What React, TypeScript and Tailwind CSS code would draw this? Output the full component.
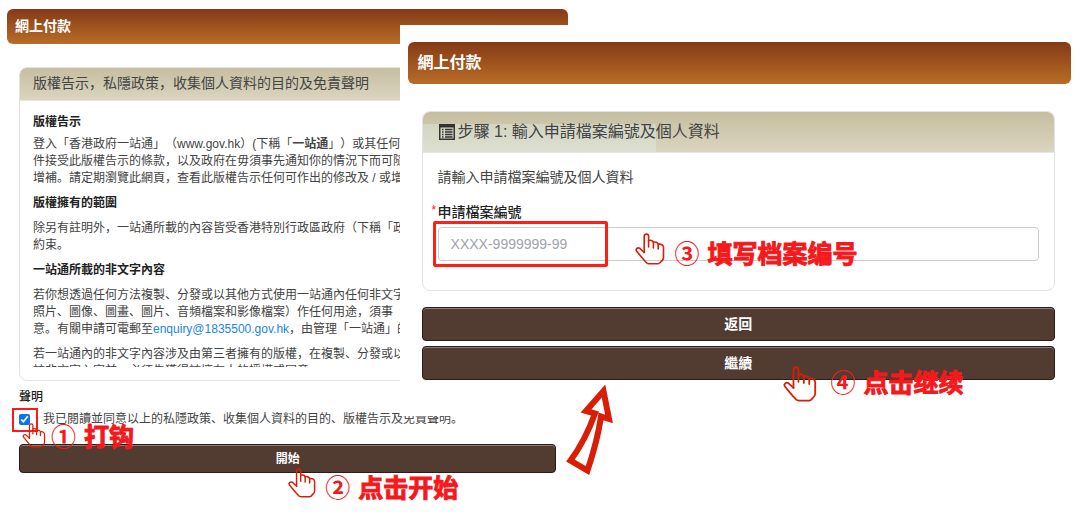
import React from 'react'

const Hand = ({ className }: { className: string }) => {
  return (
    <svg
      viewBox="0 0 30 32"
      fill="none"
      stroke="#d81e06"
      strokeWidth="1.6"
      strokeLinecap="round"
      strokeLinejoin="round"
      aria-hidden="true"
      className={className}
    >
      <path d="M9.200 19.500V3.300a2.200 2.200 0 0 1 4.400 0V14" />
      <path d="M13.600 7.600c3-.8 4.800.2 4.800 2.600V15" />
      <path d="M18.400 9.200c3-.5 4.800.5 4.800 2.800V16" />
      <path d="M23.200 11.200c3.200-.4 5.300.8 5.300 3.400V24.500c0 1-.3 1.800-1 2.600l-2.500 2.700c-.7.700-1.200.9-2 .9H14c-1 0-1.800-.3-2.500-1L8.500 26.500 1.600 18.200c-1.400-1.800.8-4.200 3-3l4.600 4.300" />
    </svg>
  )
}

const Note = ({ step, children, className }: { step: string; children: React.ReactNode; className: string }) => {
  return (
    <p
      className={`absolute z-20 flex gap-2 whitespace-nowrap font-bold text-[25px] leading-[30px] text-[#f5191b] font-['Noto_Sans_CJK_SC',sans-serif] pointer-events-none ${className}`}
    >
      <span>{step}</span>
      <span className="[-webkit-text-stroke:1px_#f5191b]">{children}</span>
    </p>
  )
}

const TitleBar = ({ children, className }: { children: React.ReactNode; className: string }) => {
  return (
    <h1 className={`font-bold text-white bg-linear-to-b from-[#843a16] to-[#b96d27] rounded-md ${className}`}>
      {children}
    </h1>
  )
}

const Button = ({ children, className }: { children: React.ReactNode; className: string }) => {
  return (
    <button
      type="button"
      className={`w-full font-bold text-white bg-[#523c32] border border-[#2a1c17] rounded-sm shadow-[inset_0_1px_0_#8f7f78] ${className}`}
    >
      {children}
    </button>
  )
}

const Terms = () => {
  return (
    <section className="w-[53%] pt-[9px] pl-[7px] pr-1 text-xs leading-[17px]">
      <TitleBar className="h-[35px] px-2 text-sm leading-[35px]">網上付款</TitleBar>
      <div className="px-3 pt-[23px]">
        <div className="border border-[#e3e3e3] rounded-lg overflow-hidden">
          <h2 className="h-[33px] px-[13px] text-sm leading-[31px] whitespace-nowrap bg-linear-to-b from-[#c5bea0] to-[#dbd5c0] border-b border-[#e8e6e0]">
            版權告示，私隱政策，收集個人資料的目的及免責聲明
          </h2>
          <div className="px-[13px] pt-[13px] pb-[13px]">
            <div className="h-[253px] overflow-hidden whitespace-nowrap flex flex-col gap-2">
              <div>
                <h3 className="font-bold text-[#222] pb-[5px]">版權告示</h3>
                <p>
                  登入「香港政府一站通」（www.gov.hk）(下稱「<b>一站通</b>」）或其任何網
                  <br />
                  件接受此版權告示的條款，以及政府在毋須事先通知你的情況下而可隨
                  <br />
                  增補。請定期瀏覽此網頁，查看此版權告示任何可作出的修改及 / 或增
                </p>
              </div>
              <h3 className="font-bold text-[#222]">版權擁有的範圍</h3>
              <p>
                除另有註明外，一站通所載的內容皆受香港特別行政區政府（下稱「政
                <br />
                約束。
              </p>
              <h3 className="font-bold text-[#222]">一站通所載的非文字內容</h3>
              <p>
                若你想透過任何方法複製、分發或以其他方式使用一站通內任何非文字
                <br />
                照片、圖像、圖畫、圖片、音頻檔案和影像檔案）作任何用途，須事
                <br />
                意。有關申請可電郵至
                <a href="mailto:enquiry@1835500.gov.hk" className="text-[#2186e0]">
                  enquiry@1835500.gov.hk
                </a>
                ，由管理「一站通」的
              </p>
              <p>
                若一站通內的非文字內容涉及由第三者擁有的版權，在複製、分發或以
                <br />
                該非文字內容前，必須先獲得該擁有人的授權或同意。
              </p>
            </div>
          </div>
        </div>
        <h3 className="pt-2 font-medium text-[#222]">聲明</h3>
        <div className="relative flex items-center pt-[5px]">
          <input id="agree" type="checkbox" defaultChecked className="w-[11px] h-[11px] accent-[#0b74e8]" />
          <label htmlFor="agree" className="pl-[13px] whitespace-nowrap">
            我已閱讀並同意以上的私隱政策、收集個人資料的目的、版權告示及免責聲明。
          </label>
          <span className="absolute -left-[7px] top-[2px] w-[26px] h-6 border-2 border-[#ff1a1a] pointer-events-none"></span>
          <Hand className="absolute left-[3px] top-[17px] w-6 h-[25px] z-20" />
          <Note step="①" className="left-8 top-[14px]">打钩</Note>
        </div>
        <div className="relative pt-4">
          <Button className="h-[29px] text-xs">開始</Button>
          <Hand className="absolute left-1/2 top-10 w-7 h-[30px] z-20" />
          <Note step="②" className="left-[57%] top-[43px]">点击开始</Note>
        </div>
      </div>
    </section>
  )
}

const StepOne = () => {
  return (
    <section className="absolute z-10 left-[37%] right-0 top-[25px] bg-white pt-[17px] pl-2 pr-[9px] pb-9 text-sm">
      <TitleBar className="h-[42px] px-[10px] text-base leading-[42px]">網上付款</TitleBar>
      <div className="pl-[14px] pr-4 pt-[27px]">
        <div className="border border-[#e3e3e3] rounded-lg overflow-hidden">
          <h2 className="relative h-[41px] px-4 flex items-center gap-[3px] text-base bg-linear-to-b from-[#c5bea0] to-[#dbd5c0] border-b border-[#e8e6e0]">
            <span className="absolute left-0 bottom-0 w-[37%] h-[28px] bg-[#e2f4f0]/35"></span>
            <svg viewBox="0 0 16 16" className="relative w-4 h-4" fill="none" stroke="#333" aria-hidden="true">
              <rect x="0.75" y="0.75" width="14.5" height="14.5" strokeWidth="1.5" />
              <path d="M0 2h16" strokeWidth="3" />
              <path d="M3 5.5h1.5M3 8h1.5M3 10.5h1.5M3 13h1.5M6 5.5h7.5M6 8h7.5M6 10.5h7.5M6 13h7.5" strokeWidth="1.5" />
            </svg>
            <span className="relative">步驟 1: 輸入申請檔案編號及個人資料</span>
          </h2>
          <div className="px-[15px] pt-[14px] pb-[29px]">
            <p className="leading-5">請輸入申請檔案編號及個人資料</p>
            <label htmlFor="fileNo" className="relative block pt-[15px] pb-px leading-5 font-medium text-[#222]">
              <span className="absolute -left-[6px] text-xs text-[#ff1a1a]">*</span>
              申請檔案編號
            </label>
            <div className="relative pt-1">
              <input
                id="fileNo"
                type="text"
                placeholder="XXXX-9999999-99"
                className="block w-full h-[34px] px-3 border border-[#ccc] rounded-sm placeholder:text-[#a0a3aa]"
              />
              <span className="absolute -left-[5px] -top-[2px] w-[175px] h-[46px] border-[3px] border-[#ff1f14] rounded-xs pointer-events-none"></span>
              <Hand className="absolute left-[197px] top-[10px] w-[30px] h-8" />
              <Note step="③" className="left-[237px] top-[14px]">填写档案编号</Note>
            </div>
          </div>
        </div>
        <div className="relative flex flex-col gap-[5px] pt-4">
          <Button className="h-[34px]">返回</Button>
          <Button className="h-[34px]">繼續</Button>
          <Hand className="absolute left-[57%] top-[75px] w-[34px] h-9" />
          <Note step="④" className="left-[409px] top-[75px]">点击继续</Note>
          <svg
            viewBox="563 380 54 100"
            fill="none"
            stroke="#d81e06"
            strokeWidth="6"
            className="absolute left-[141px] top-[89px] w-[54px] h-[100px]"
            aria-hidden="true"
          >
            <path d="M603.5 391L609 419L601 416.500C598 438 593 454 587.500 470.500L570.500 460.500C582 445 589 430 595 413.500L586 411Z" />
          </svg>
        </div>
      </div>
    </section>
  )
}

const App = () => {
  return (
    <main className="relative pb-[51px] bg-white text-[#444] font-['Liberation_Sans','Noto_Sans_CJK_SC',sans-serif] [text-spacing-trim:space-all]">
      <Terms />
      <StepOne />
    </main>
  )
}

export default App
